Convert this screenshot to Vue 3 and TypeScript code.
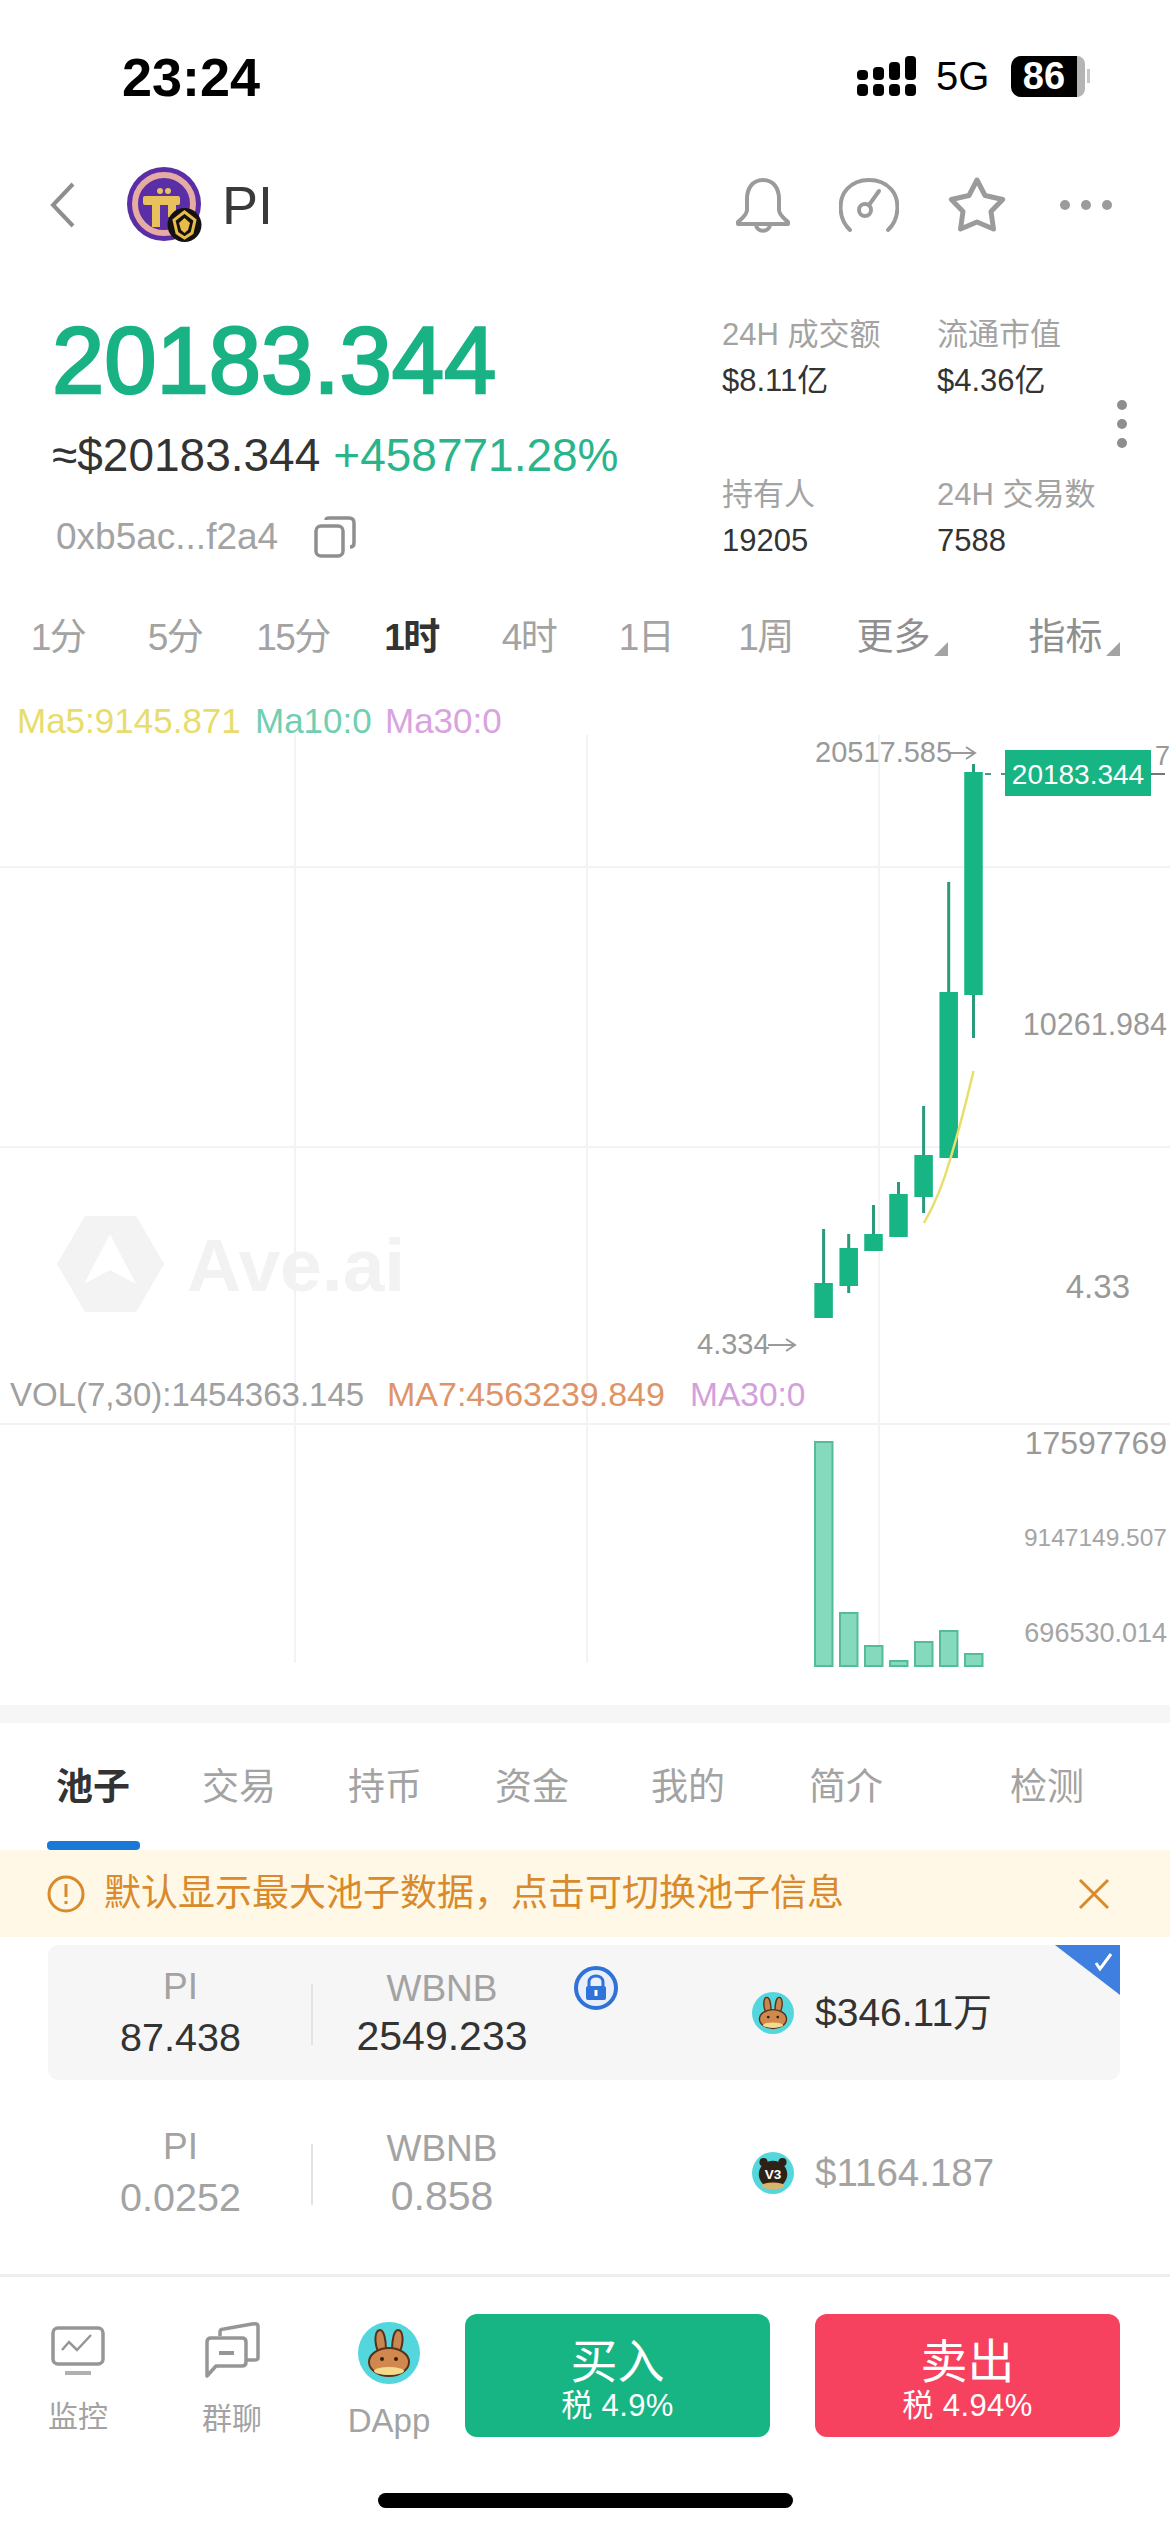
<script setup lang="ts">
interface Candle { x: number; wickTop: number; wickBottom: number; top: number; bottom: number }
interface VolBar { x: number; top: number }
interface ChartLabel { x: number; y: number; text: string; size: number; anchor?: string; fill: string }

const frames = ['1分', '5分', '15分', '1时', '4时', '1日', '1周']
const stats = [
  { label: '24H 成交额', value: '$8.11亿' },
  { label: '流通市值', value: '$4.36亿' },
  { label: '持有人', value: '19205' },
  { label: '24H 交易数', value: '7588' },
]
const tabs = ['池子', '交易', '持币', '资金', '我的', '简介', '检测']

const candles: Candle[] = [
  { x: 823.6, wickTop: 1229, wickBottom: 1318, top: 1283, bottom: 1318 },
  { x: 848.7, wickTop: 1234, wickBottom: 1293, top: 1248, bottom: 1286 },
  { x: 873.5, wickTop: 1205, wickBottom: 1251, top: 1234, bottom: 1251 },
  { x: 898.5, wickTop: 1182, wickBottom: 1236, top: 1194, bottom: 1237 },
  { x: 923.6, wickTop: 1106, wickBottom: 1213, top: 1155, bottom: 1197 },
  { x: 948.7, wickTop: 882, wickBottom: 1158, top: 992, bottom: 1158 },
  { x: 973.5, wickTop: 764, wickBottom: 1038, top: 772, bottom: 995 },
]
const bars: VolBar[] = [
  { x: 815, top: 1442 },
  { x: 840, top: 1613 },
  { x: 865, top: 1646 },
  { x: 890, top: 1661 },
  { x: 915, top: 1642 },
  { x: 940, top: 1631 },
  { x: 965, top: 1654 },
]
const labels: ChartLabel[] = [
  { x: 17, y: 733, text: 'Ma5:9145.871', size: 35, fill: '#e8dc6c' },
  { x: 255, y: 733, text: 'Ma10:0', size: 35, fill: '#6fcfb0' },
  { x: 385, y: 733, text: 'Ma30:0', size: 35, fill: '#d9a3e0' },
  { x: 815, y: 762, text: '20517.585', size: 29, fill: '#999' },
  { x: 1167, y: 1035, text: '10261.984', size: 30.5, anchor: 'end', fill: '#999' },
  { x: 1130, y: 1298, text: '4.33', size: 33, anchor: 'end', fill: '#999' },
  { x: 697, y: 1354, text: '4.334', size: 29, fill: '#999' },
  { x: 10, y: 1406, text: 'VOL(7,30):1454363.145', size: 33, fill: '#a0a0a0' },
  { x: 387, y: 1406, text: 'MA7:4563239.849', size: 34, fill: '#de9468' },
  { x: 690, y: 1406, text: 'MA30:0', size: 33.5, fill: '#d3a0dc' },
  { x: 1167, y: 1454, text: '17597769', size: 32, anchor: 'end', fill: '#999' },
  { x: 1167, y: 1546, text: '9147149.507', size: 24.5, anchor: 'end', fill: '#a5a5a5' },
  { x: 1167, y: 1642, text: '696530.014', size: 27, anchor: 'end', fill: '#a5a5a5' },
]
</script>

<template>
  <div class="screen">
    <div class="status">
      <span class="time">23:24</span>
      <div class="status-right">
        <svg class="signal" width="60" height="42" viewBox="0 0 60 42">
          <g fill="#000">
            <rect x="0" y="15" width="11" height="10" rx="4" />
            <rect x="16" y="12" width="11" height="13" rx="4" />
            <rect x="32" y="7" width="11" height="18" rx="4" />
            <rect x="48" y="1" width="11" height="24" rx="4" />
            <rect x="0" y="29" width="11" height="12" rx="4" />
            <rect x="16" y="29" width="11" height="12" rx="4" />
            <rect x="32" y="29" width="11" height="12" rx="4" />
            <rect x="48" y="29" width="11" height="12" rx="4" />
          </g>
        </svg>
        <span class="net">5G</span>
        <div class="battery">
          <span class="battery-fill">86</span>
          <span class="battery-rest"></span>
          <span class="battery-cap"></span>
        </div>
      </div>
    </div>

    <header class="head">
      <svg class="back" width="26" height="46" viewBox="0 0 26 46">
        <path d="M23 2 L3 23 L23 44" fill="none" stroke="#8e8e8e" stroke-width="4" />
      </svg>
      <svg class="logo" width="76" height="76" viewBox="0 0 76 76">
        <circle cx="37" cy="37" r="37" fill="#5a2ea6" />
        <circle cx="37" cy="37" r="29" fill="none" stroke="#e6aba3" stroke-width="6" />
        <g fill="#e9c15c">
          <rect x="16" y="29" width="37" height="9" rx="2" />
          <rect x="25" y="38" width="8" height="22" />
          <rect x="41" y="38" width="8" height="12" />
          <circle cx="33" cy="24" r="3" />
          <circle cx="41" cy="24" r="3" />
        </g>
        <circle cx="57.5" cy="58" r="17" fill="#141210" />
        <path d="M57.5 45 L68 53 L65 66 L57.5 71 L50 66 L47 53 Z" fill="none" stroke="#e9bc4a" stroke-width="3" />
        <path d="M57.5 51 L63 56 L61 63 L57.5 66 L54 63 L52 56 Z" fill="#e9bc4a" />
      </svg>
      <span class="name">PI</span>
      <div class="head-icons">
        <svg width="56" height="56" viewBox="0 0 56 56" fill="none" stroke="#9b9b9b" stroke-width="4">
          <path d="M28 3 C17 3 12 12 12 22 L12 33 C12 38 7 41 3 45 L3 47 L53 47 L53 45 C49 41 44 38 44 33 L44 22 C44 12 39 3 28 3 Z" stroke-linejoin="round" />
          <path d="M21 47 C21 56 35 56 35 47" />
        </svg>
        <svg width="60" height="56" viewBox="0 0 60 56" fill="none" stroke="#9b9b9b" stroke-width="4">
          <path d="M11 53 C-1 42 -1 22 8 12 C19 0 41 0 52 12 C61 22 61 42 49 53" stroke-linecap="round" />
          <circle cx="26" cy="33" r="6" />
          <path d="M30 28 L40 14" stroke-linecap="round" />
        </svg>
        <svg width="60" height="58" viewBox="0 0 60 58" fill="none" stroke="#9b9b9b" stroke-width="5" stroke-linejoin="round">
          <path d="M30 4 L38 19.5 L55.7 23.5 L44 35.5 L46.5 53 L30 46 L13.5 53 L16 35.5 L4.3 23.5 L22 19.5 Z" />
        </svg>
        <div class="more-dots"><i></i><i></i><i></i></div>
      </div>
    </header>

    <section class="info">
      <div class="info-left">
        <div class="price">20183.344</div>
        <div class="sub"><span>≈$20183.344</span><span class="pct">+458771.28%</span></div>
        <div class="addr">
          <span>0xb5ac...f2a4</span>
          <svg width="42" height="42" viewBox="0 0 42 42" fill="none" stroke="#8f8f8f" stroke-width="3.5">
            <rect x="2" y="10" width="27" height="30" rx="5" />
            <path d="M12 4 Q12 2 15 2 L35 2 Q40 2 40 7 L40 27 Q40 31 36 31" />
          </svg>
        </div>
      </div>
      <div class="stats">
        <div v-for="s in stats" :key="s.label" class="stat">
          <div class="stat-label">{{ s.label }}</div>
          <div class="stat-value">{{ s.value }}</div>
        </div>
      </div>
      <div class="vdots"><i></i><i></i><i></i></div>
    </section>

    <nav class="frames">
      <span v-for="f in frames" :key="f" class="frame" :class="{ on: f === '1时' }">{{ f }}</span>
      <span class="frame drop">更多<i class="tri"></i></span>
      <span class="frame drop">指标<i class="tri"></i></span>
    </nav>

    <svg class="chart" width="1170" height="1025" viewBox="0 680 1170 1025">
      <g stroke="#f3f3f3" stroke-width="2">
        <line x1="295" y1="735" x2="295" y2="1663" />
        <line x1="587" y1="735" x2="587" y2="1663" />
        <line x1="879" y1="735" x2="879" y2="1663" />
        <line x1="0" y1="867" x2="1170" y2="867" />
        <line x1="0" y1="1147" x2="1170" y2="1147" />
        <line x1="0" y1="1424" x2="1170" y2="1424" />
      </g>

      <path d="M85 1216 L136 1216 L164 1264 L136 1312 L85 1312 L57 1264 Z" fill="#f3f3f3" />
      <path d="M110 1234 L136 1284 L110 1270 L84 1284 Z" fill="#fff" />
      <text x="187" y="1291" class="mark">Ave.ai</text>

      <g v-for="c in candles" :key="c.x" fill="#17b583">
        <rect :x="c.x - 1.5" :y="c.wickTop" width="3" :height="c.wickBottom - c.wickTop" fill="#2b9a7a" />
        <rect :x="c.x - 9.25" :y="c.top" width="18.5" :height="c.bottom - c.top" />
      </g>
      <path d="M924 1223 Q940 1195 950 1160 Q962 1120 973.5 1071" fill="none" stroke="#e8df6a" stroke-width="2.5" />

      <rect v-for="b in bars" :key="b.x" :x="b.x" :y="b.top" width="17.5" :height="1666 - b.top" fill="#85d9bd" stroke="#54bb9b" stroke-width="2" />

      <g fill="none" stroke="#9a9a9a" stroke-width="2">
        <path d="M949 753 L974 753 M966 747 L975 753 L966 759" />
        <path d="M768 1345 L794 1345 M786 1339 L795 1345 L786 1351" />
      </g>

      <line x1="985" y1="774" x2="1005" y2="774" stroke="#4a9a80" stroke-width="2" stroke-dasharray="6 10" />
      <line x1="1151" y1="774" x2="1165" y2="774" stroke="#777" stroke-width="2" />
      <rect x="1005" y="750" width="146" height="46" fill="#17b583" />
      <text x="1078" y="784" text-anchor="middle" class="tag">20183.344</text>
      <text x="1155" y="765" font-size="27" fill="#999" class="lbl">7</text>

      <text
        v-for="l in labels"
        :key="l.text"
        :x="l.x"
        :y="l.y"
        :font-size="l.size"
        :text-anchor="l.anchor || 'start'"
        :fill="l.fill"
        class="lbl"
      >{{ l.text }}</text>
    </svg>

    <div class="band"></div>

    <nav class="tabs">
      <span v-for="(t, i) in tabs" :key="t" class="tab" :class="{ on: i === 0 }">{{ t }}</span>
      <i class="ink"></i>
    </nav>

    <div class="notice">
      <svg width="38" height="38" viewBox="0 0 38 38" fill="none" stroke="#d98a2b" stroke-width="3">
        <circle cx="19" cy="19" r="17" />
        <path d="M19 9 L19 22 M19 26 L19 29" />
      </svg>
      <span class="notice-text">默认显示最大池子数据，点击可切换池子信息</span>
      <svg class="notice-x" width="32" height="32" viewBox="0 0 32 32" stroke="#d98a2b" stroke-width="3">
        <path d="M2 2 L30 30 M30 2 L2 30" />
      </svg>
    </div>

    <section class="pools">
      <div class="pool active">
        <div class="cell">
          <span class="cell-label">PI</span>
          <span class="cell-value dark">87.438</span>
        </div>
        <div class="cell">
          <span class="cell-label">WBNB</span>
          <span class="cell-value dark wide">2549.233</span>
        </div>
        <svg class="lock" width="44" height="44" viewBox="0 0 44 44">
          <circle cx="22" cy="22" r="20" fill="#e8eefa" stroke="#2f73d8" stroke-width="4" />
          <path d="M15 20 L15 16 C15 8 29 8 29 16 L29 20" fill="none" stroke="#2f73d8" stroke-width="3" />
          <rect x="12" y="20" width="20" height="14" rx="2" fill="#2f73d8" />
          <rect x="20.5" y="24" width="3" height="6" fill="#fff" />
        </svg>
        <div class="amount">
          <svg width="42" height="42" viewBox="0 0 62 62">
            <circle cx="31" cy="31" r="31" fill="#53d6dc" />
            <path d="M22 34 C14 18 18 8 22 8 C26 8 28 18 28 28 M40 34 C48 18 44 8 40 8 C36 8 34 18 34 28" fill="#c98650" stroke="#5a3018" stroke-width="2" />
            <ellipse cx="31" cy="40" rx="20" ry="14" fill="#d1884f" stroke="#5a3018" stroke-width="2" />
            <ellipse cx="31" cy="49" rx="15" ry="4" fill="#f5d98c" />
            <circle cx="24" cy="37" r="2" fill="#3a1e0c" />
            <circle cx="38" cy="37" r="2" fill="#3a1e0c" />
          </svg>
          <span class="usd usd-main">$346.11万</span>
        </div>
        <span class="corner"></span>
        <svg class="check" width="26" height="18" viewBox="0 0 26 18" fill="none" stroke="#fff" stroke-width="3">
          <path d="M8 10 L12 16 L23 1" />
        </svg>
      </div>

      <div class="pool">
        <div class="cell">
          <span class="cell-label">PI</span>
          <span class="cell-value">0.0252</span>
        </div>
        <div class="cell">
          <span class="cell-label">WBNB</span>
          <span class="cell-value wide">0.858</span>
        </div>
        <div class="amount">
          <svg width="42" height="42" viewBox="0 0 62 62">
            <circle cx="31" cy="31" r="31" fill="#53d6dc" />
            <circle cx="17" cy="15" r="6" fill="#2e2217" />
            <circle cx="45" cy="15" r="6" fill="#2e2217" />
            <ellipse cx="31" cy="33" rx="21" ry="20" fill="#2e2217" />
            <ellipse cx="31" cy="50" rx="17" ry="5" fill="#d9b46c" />
            <text x="31" y="40" text-anchor="middle" class="v3">V3</text>
          </svg>
          <span class="usd">$1164.187</span>
        </div>
      </div>
    </section>

    <footer class="bottom">
      <div class="bottom-row">
        <div class="nav-item">
          <svg width="54" height="50" viewBox="0 0 54 50" fill="none" stroke="#969696" stroke-width="3.5">
            <rect x="2" y="2" width="50" height="36" rx="5" />
            <path d="M11 24 L18 16 L26 24 L40 9" stroke-width="2.5" />
            <path d="M14 47 L40 47" stroke-width="4" stroke="#b0b0b0" />
          </svg>
          <span>监控</span>
        </div>
        <div class="nav-item">
          <svg width="56" height="56" viewBox="0 0 56 56" fill="none" stroke="#969696" stroke-width="3.5">
            <path d="M16 14 L16 10 Q16 7 20 7 L48 2 Q54 1 54 4 L54 36 Q54 38 50 38 L42 38" />
            <path d="M7 16 L38 16 Q42 16 42 20 L42 40 Q42 44 38 44 L12 44 L3 54 L3 20 Q3 16 7 16 Z" fill="#fff" stroke-linejoin="round" />
            <path d="M15 31 L30 31" stroke-width="4" />
          </svg>
          <span>群聊</span>
        </div>
        <div class="nav-item dapp">
          <svg width="62" height="62" viewBox="0 0 62 62">
            <circle cx="31" cy="31" r="31" fill="#53d6dc" />
            <path d="M22 34 C14 18 18 8 22 8 C26 8 28 18 28 28 M40 34 C48 18 44 8 40 8 C36 8 34 18 34 28" fill="#c98650" stroke="#5a3018" stroke-width="2" />
            <ellipse cx="31" cy="40" rx="20" ry="14" fill="#d1884f" stroke="#5a3018" stroke-width="2" />
            <ellipse cx="31" cy="49" rx="15" ry="4" fill="#f5d98c" />
            <circle cx="24" cy="37" r="2" fill="#3a1e0c" />
            <circle cx="38" cy="37" r="2" fill="#3a1e0c" />
          </svg>
          <span>DApp</span>
        </div>
        <div class="trade-btn buy"><b>买入</b><small>税 4.9%</small></div>
        <div class="trade-btn sell"><b>卖出</b><small>税 4.94%</small></div>
      </div>
      <div class="home-bar"></div>
    </footer>
  </div>
</template>

<style scoped>
.screen {
  width: 1170px;
  height: 2532px;
  background: #fff;
  overflow: hidden;
  font-family: "Liberation Sans", "Noto Sans CJK SC", sans-serif;
  color: #333;
}
.status {
  height: 150px;
  display: flex;
  justify-content: space-between;
  box-sizing: border-box;
  padding: 54px 80px 0 122px;
}
.time {
  font-size: 54px;
  line-height: 46px;
  font-weight: 700;
  color: #000;
}
.status-right {
  display: flex;
  align-items: flex-start;
  height: 44px;
}
.signal { margin-right: 19px; margin-top: 1px; }
.net {
  font-size: 40px;
  line-height: 44px;
  color: #000;
  margin-right: 19px;
  width: 56px;
}
.battery {
  display: flex;
  align-items: center;
  height: 42px;
  margin-top: 1px;
}
.battery-fill {
  width: 66px;
  height: 41px;
  background: #000;
  color: #fff;
  border-radius: 10px 0 0 10px;
  font-size: 38px;
  font-weight: 700;
  line-height: 41px;
  text-align: center;
}
.battery-rest {
  width: 8px;
  height: 41px;
  background: #b5b5b5;
  border-radius: 0 8px 8px 0;
}
.battery-cap {
  width: 3px;
  height: 14px;
  background: #c8c8c8;
  margin-left: 2px;
}
.head {
  height: 110px;
  display: flex;
  align-items: center;
  padding-left: 50px;
  box-sizing: border-box;
}
.back { margin-right: 51px; }
.logo { margin-right: 19px; }
.name {
  font-size: 54px;
  color: #3a3a3a;
  line-height: 60px;
}
.head-icons {
  margin-left: auto;
  display: flex;
  align-items: center;
  padding-right: 58px;
  gap: 48px;
}
.more-dots {
  display: flex;
  gap: 11px;
  margin-left: 5px;
}
.more-dots i {
  width: 10px;
  height: 10px;
  border-radius: 50%;
  background: #9b9b9b;
}
.info {
  height: 340px;
  display: flex;
  box-sizing: border-box;
}
.info-left {
  width: 722px;
  padding: 51px 0 0 52px;
  box-sizing: border-box;
}
.price {
  font-size: 94px;
  line-height: 100px;
  font-weight: 400;
  color: #19b285;
  -webkit-text-stroke: 2.5px #19b285;
}
.sub {
  margin-top: 19px;
  font-size: 46px;
  line-height: 50px;
  color: #333;
  display: flex;
  gap: 13px;
}
.pct { color: #2ab48b; }
.addr {
  margin-top: 35px;
  margin-left: 4px;
  display: flex;
  align-items: center;
  gap: 36px;
  font-size: 37px;
  line-height: 44px;
  color: #a3a3a3;
}
.stats {
  width: 395px;
  padding-top: 55px;
  display: grid;
  grid-template-columns: 215px 180px;
  grid-auto-rows: 87px;
  row-gap: 73px;
  box-sizing: border-box;
}
.stat-label {
  font-size: 31px;
  line-height: 40px;
  color: #a3a3a3;
  white-space: nowrap;
}
.stat-value {
  margin-top: 6px;
  font-size: 31px;
  line-height: 40px;
  color: #333;
  white-space: nowrap;
}
.vdots {
  display: flex;
  flex-direction: column;
  gap: 9px;
  padding-top: 140px;
}
.vdots i {
  width: 10px;
  height: 10px;
  border-radius: 50%;
  background: #8e8e8e;
}
.frames {
  height: 80px;
  display: grid;
  grid-template-columns: 116px 118px 118px 119px 116px 118px 121px 152px 192px;
  align-items: center;
  box-sizing: border-box;
  padding-bottom: 5px;
}
.frame {
  text-align: center;
  font-size: 37px;
  line-height: 50px;
  color: #a3a3a3;
  white-space: nowrap;
  letter-spacing: -1.5px;
}
.frame.on {
  color: #333;
  font-weight: 700;
}
.frame.drop {
  color: #8f8f8f;
  position: relative;
  letter-spacing: 0;
}
.tri {
  display: inline-block;
  width: 0;
  height: 0;
  border-left: 14px solid transparent;
  border-bottom: 14px solid #a3a3a3;
  margin-left: 3px;
  vertical-align: -6px;
}
.chart {
  display: block;
}
.lbl {
  font-family: "Liberation Sans", sans-serif;
}
.mark {
  font-family: "Liberation Sans", sans-serif;
  font-weight: 700;
  font-size: 75px;
  fill: #f2f2f2;
}
.tag {
  font-family: "Liberation Sans", sans-serif;
  font-size: 28px;
  fill: #fff;
}
.v3 {
  font-family: "Liberation Sans", sans-serif;
  font-size: 20px;
  font-weight: 700;
  fill: #fff;
}
.band {
  height: 18px;
  background: #f6f6f6;
}
.tabs {
  height: 127px;
  box-sizing: border-box;
  padding: 41px 0 0 56px;
  display: grid;
  grid-template-columns: 146px 146px 147px 156px 158px 201px auto;
  align-items: start;
  position: relative;
}
.tab {
  font-size: 37px;
  line-height: 48px;
  color: #a3a3a3;
}
.tab.on {
  color: #333;
  font-weight: 700;
}
.ink {
  position: absolute;
  left: 47px;
  bottom: 0;
  width: 93px;
  height: 9px;
  background: #1a78d8;
  border-radius: 4px;
}
.notice {
  height: 87px;
  background: #fff8e6;
  display: flex;
  align-items: center;
  padding: 0 60px 0 47px;
  box-sizing: border-box;
  color: #d98a2b;
}
.notice-text {
  font-size: 37px;
  line-height: 44px;
  margin-left: 19px;
  white-space: nowrap;
}
.notice-x { margin-left: auto; }
.pools {
  height: 337px;
  box-sizing: border-box;
  padding: 8px 50px 0 48px;
  display: flex;
  flex-direction: column;
  gap: 25px;
}
.pool {
  height: 135px;
  display: grid;
  grid-template-columns: 265px 258px 1fr;
  align-items: center;
  position: relative;
  border-radius: 10px;
}
.pool.active { background: #f6f6f7; }
.cell {
  display: flex;
  flex-direction: column;
  align-items: center;
  gap: 7px;
  position: relative;
}
.cell:first-child::after {
  content: "";
  position: absolute;
  right: 0;
  top: 18px;
  bottom: 14px;
  width: 2px;
  background: #e3e3e3;
}
.cell-label {
  font-size: 37px;
  line-height: 42px;
  color: #a3a3a3;
}
.cell-value {
  font-size: 39.5px;
  line-height: 44px;
  color: #a3a3a3;
}
.cell-value.dark { color: #333; }
.cell-value.wide { font-size: 41px; margin-top: -3px; }
.lock {
  position: absolute;
  left: 526px;
  top: 21px;
}
.amount {
  display: flex;
  align-items: center;
  gap: 21px;
  padding-left: 181px;
}
.usd {
  font-size: 38.5px;
  line-height: 46px;
  color: #a3a3a3;
  white-space: nowrap;
}
.usd-main { color: #333; font-size: 39px; }
.corner {
  position: absolute;
  right: 0;
  top: 0;
  width: 0;
  height: 0;
  border-top: 50px solid #3f7fe0;
  border-left: 65px solid transparent;
}
.check {
  position: absolute;
  right: 6px;
  top: 8px;
}
.bottom {
  flex: 1;
  border-top: 3px solid #eeeeee;
}
.bottom-row {
  display: grid;
  grid-template-columns: 156px 152px 157px 305px 305px;
  column-gap: 0;
  padding-top: 37px;
  height: 123px;
}
.nav-item {
  display: flex;
  flex-direction: column;
  align-items: center;
  font-size: 30px;
  line-height: 40px;
  color: #a3a3a3;
  padding-top: 12px;
  gap: 21px;
}
.nav-item:nth-child(2) { padding-top: 8px; gap: 21px; }
.nav-item.dapp {
  padding: 8px 0 0 5px;
  font-size: 33px;
  gap: 17px;
}
.trade-btn {
  height: 123px;
  border-radius: 12px;
  color: #fff;
  display: flex;
  flex-direction: column;
  align-items: center;
  padding-top: 22px;
  box-sizing: border-box;
}
.trade-btn b {
  font-size: 47px;
  line-height: 52px;
  font-weight: 400;
}
.trade-btn small {
  font-size: 31px;
  line-height: 36px;
  letter-spacing: 0.4px;
}
.buy { background: #17b583; }
.sell {
  background: #f6425f;
  margin-left: 45px;
  width: 305px;
}
.home-bar {
  width: 415px;
  height: 15px;
  background: #000;
  border-radius: 8px;
  margin: 56px 0 0 378px;
}
</style>
<style>
html, body { background: #fff; }
</style>
